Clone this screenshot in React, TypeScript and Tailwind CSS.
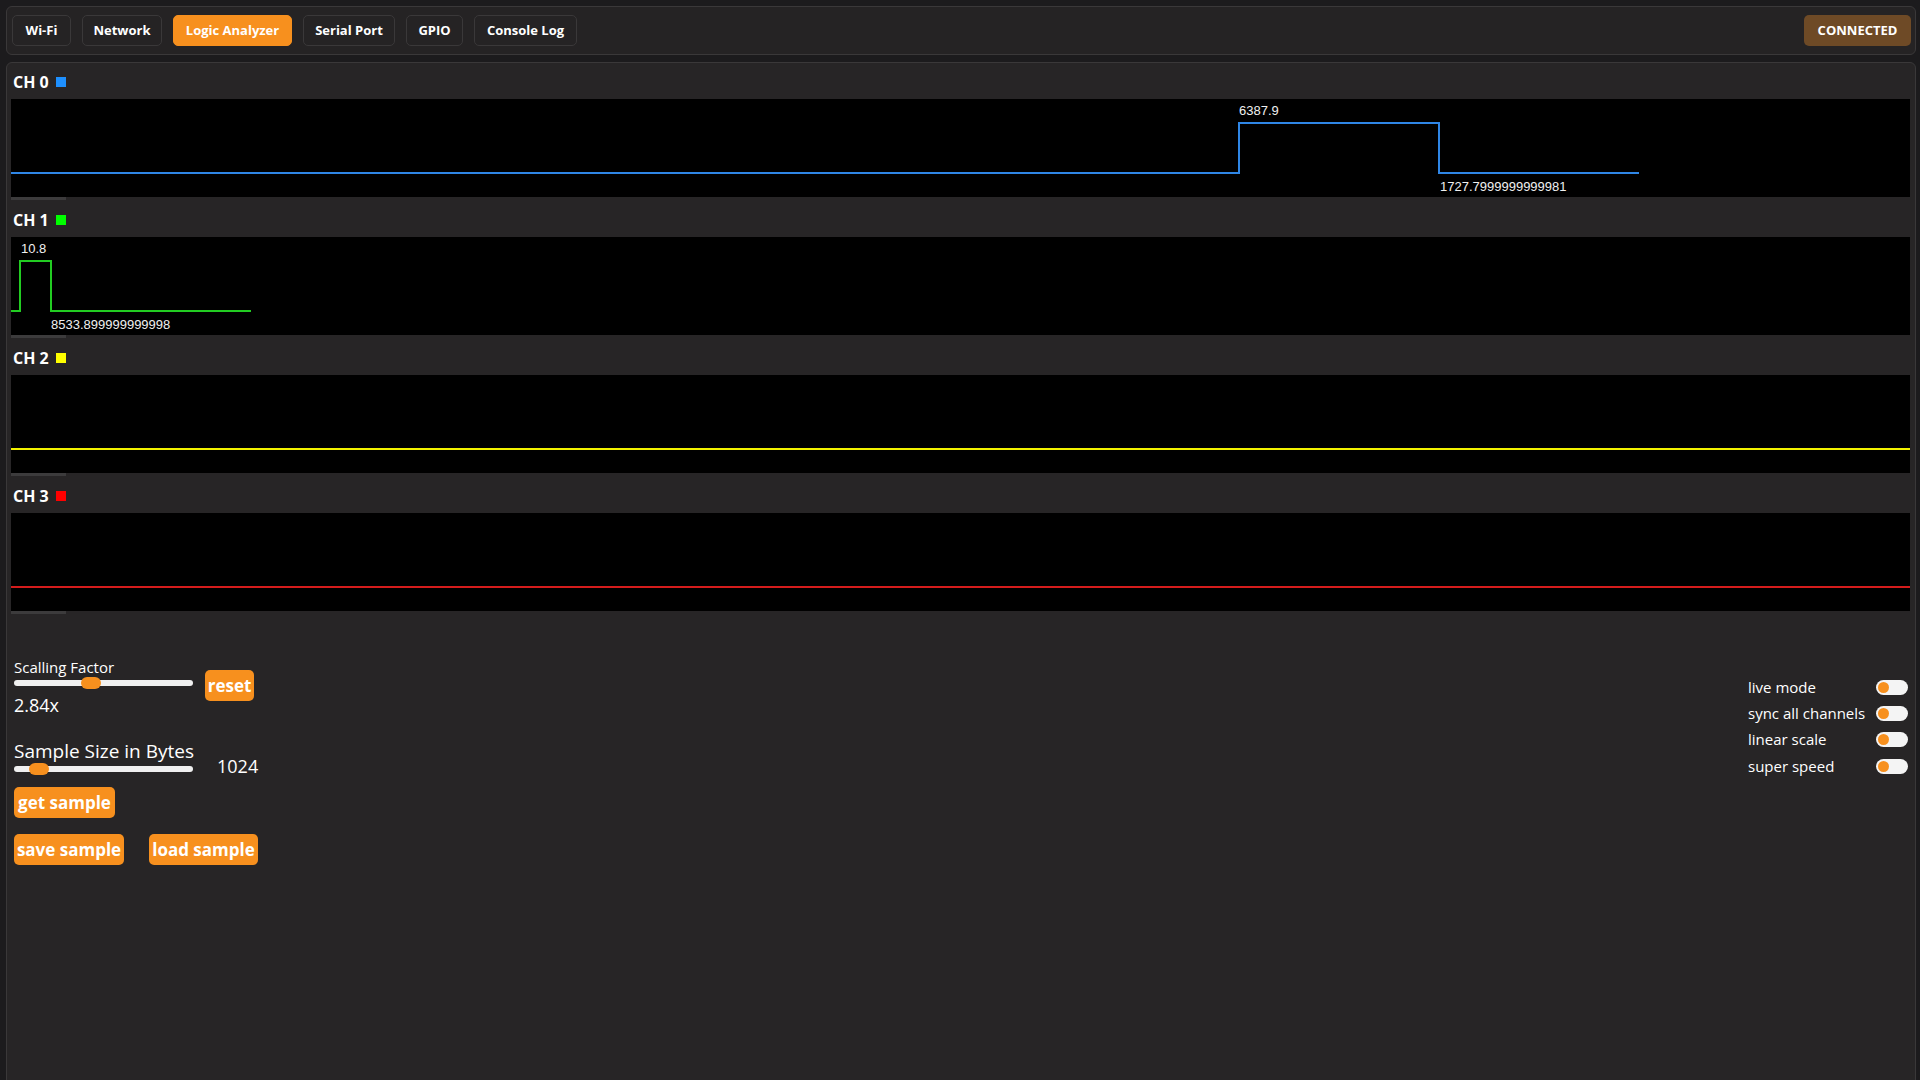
import React from "react";

const tabs = [
  { label: "Wi-Fi", w: "w-[59px]" },
  { label: "Network", w: "w-[80px]" },
  { label: "Logic Analyzer", w: "w-[119px]", active: true },
  { label: "Serial Port", w: "w-[92px]" },
  { label: "GPIO", w: "w-[57px]" },
  { label: "Console Log", w: "w-[103px]" },
];

type Ch = {
  name: string;
  sq: string;
  stroke: string;
  path: string;
  labels: { x: number; y: number; t: string }[];
};

const channels: Ch[] = [
  {
    name: "CH 0",
    sq: "bg-[#1e90ff]",
    stroke: "#2f86e6",
    path: "M0 74 H1228 V24 H1428 V74 H1628",
    labels: [
      { x: 1228, y: 15.5, t: "6387.9" },
      { x: 1429, y: 92, t: "1727.7999999999981" },
    ],
  },
  {
    name: "CH 1",
    sq: "bg-[#00ff00]",
    stroke: "#22cc22",
    path: "M0 74 H9 V24 H40 V74 H240",
    labels: [
      { x: 10, y: 15.5, t: "10.8" },
      { x: 40, y: 92, t: "8533.899999999998" },
    ],
  },
  {
    name: "CH 2",
    sq: "bg-[#ffff00]",
    stroke: "#f2f200",
    path: "M0 74 H1899",
    labels: [],
  },
  {
    name: "CH 3",
    sq: "bg-[#ff0000]",
    stroke: "#d41c1c",
    path: "M0 74 H1899",
    labels: [],
  },
];

function Channel({ ch }: { ch: Ch }) {
  return (
    <div>
      <div className="h-[36px] flex items-center gap-[7px] pl-[2px] pt-[1px] font-bold text-[16px] text-white">
        <span>{ch.name}</span>
        <span className={`w-[10px] h-[10px] ${ch.sq}`} />
      </div>
      <svg className="block w-full h-[98px] bg-black">
        <path d={ch.path} fill="none" stroke={ch.stroke} strokeWidth={2} />
        {ch.labels.map((l) => (
          <text
            key={l.t}
            x={l.x}
            y={l.y}
            fill="#f0f0f0"
            fontSize={13}
            fontFamily="'Liberation Sans', Arial, sans-serif"
          >
            {l.t}
          </text>
        ))}
      </svg>
      <div className="h-[4px]">
        <div className="h-[3px] w-[55px] bg-[#3c3b3c]" />
      </div>
    </div>
  );
}

function Slider({ pos }: { pos: number }) {
  return (
    <div className="relative h-[12px] w-[179px] flex items-center">
      <div className="h-[6px] w-full rounded-full bg-[#f0f0f0]" />
      <div
        className="absolute top-0 h-[12px] w-[20px] rounded-full bg-[#f7901e]"
        style={{ left: pos }}
      />
    </div>
  );
}

function OrangeButton({ children, w, extra = "" }: { children: React.ReactNode; w: string; extra?: string }) {
  return (
    <button
      className={`h-[31px] ${w} ${extra} rounded-[5px] bg-[#f7901e] text-white font-bold text-[17px] leading-none flex items-center justify-center whitespace-nowrap`}
    >
      {children}
    </button>
  );
}

function Toggle() {
  return (
    <div className="w-[32px] h-[15px] rounded-full bg-[#f4f4f4] flex items-center pl-[2px]">
      <div className="w-[11px] h-[11px] rounded-full bg-[#f7901e]" />
    </div>
  );
}

export default function App() {
  return (
    <div className="h-[1080px] overflow-hidden bg-[#1c1b1d] pt-[6px] pl-[6px] pr-[4px] flex flex-col gap-[7px] font-['Open_Sans',sans-serif] text-white">
      <div className="h-[49px] shrink-0 rounded-[6px] border border-[#3a3839] bg-[#252324] flex items-center justify-between pl-[5px] pr-[4px]">
        <div className="flex items-center gap-[11px]">
          {tabs.map((t) => (
            <div
              key={t.label}
              className={`h-[31px] ${t.w} rounded-[5px] flex items-center justify-center text-[13px] font-bold ${
                t.active
                  ? "bg-[#f7901e] border border-[#f7901e]"
                  : "border border-[#3a3839] bg-[#252324]"
              }`}
            >
              {t.label}
            </div>
          ))}
        </div>
        <div className="h-[31px] w-[107px] rounded-[5px] bg-[#6e4a26] flex items-center justify-center text-[13px] font-bold">
          CONNECTED
        </div>
      </div>

      <div className="h-[1040px] shrink-0 rounded-[6px] border border-[#3a3839] bg-[#272526] pl-[4px] pr-[5px]">
        {channels.map((ch) => (
          <Channel key={ch.name} ch={ch} />
        ))}

        <div className="mt-[43px] flex justify-between">
          <div className="pl-[3px] flex flex-col">
            <div className="flex items-center gap-[12px]">
              <div className="w-[179px]">
                <div className="text-[15px] leading-[19px] whitespace-nowrap">Scalling Factor</div>
                <Slider pos={67} />
                <div className="text-[18px] leading-[24px] mt-[4px]">2.84x</div>
              </div>
              <OrangeButton w="w-[49px]" extra="mb-[4px]">reset</OrangeButton>
            </div>
            <div className="flex items-end gap-[24px] mt-[22px]">
              <div className="w-[179px]">
                <div className="text-[19px] leading-[24px] whitespace-nowrap">Sample Size in Bytes</div>
                <Slider pos={15} />
              </div>
              <div className="text-[18px] leading-[24px] mb-[-3px]">1024</div>
            </div>
            <div className="mt-[12px]">
              <OrangeButton w="w-[101px]">get sample</OrangeButton>
            </div>
            <div className="mt-[16px] flex gap-[25px]">
              <OrangeButton w="w-[110px]">save sample</OrangeButton>
              <OrangeButton w="w-[109px]">load sample</OrangeButton>
            </div>
          </div>

          <div className="mt-[16px] pr-[2px] grid grid-cols-[128px_32px] auto-rows-[26.3px] items-center text-[15px]">
            <span>live mode</span>
            <Toggle />
            <span>sync all channels</span>
            <Toggle />
            <span>linear scale</span>
            <Toggle />
            <span>super speed</span>
            <Toggle />
          </div>
        </div>
      </div>
    </div>
  );
}
